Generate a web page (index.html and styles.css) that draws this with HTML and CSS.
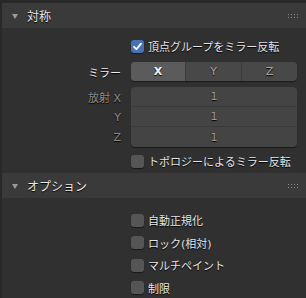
FILE: index.html
```html
<!DOCTYPE html>
<html lang="ja">
<head>
<meta charset="utf-8">
<link rel="stylesheet" href="styles.css">
</head>
<body>
<div class="app">
  <section class="panel">
    <div class="panel-header">
      <span class="tri"></span>
      <span class="title">対称</span>
      <span class="grip"><i></i><i></i><i></i><i></i><i></i><i></i><i></i><i></i></span>
    </div>
    <div class="panel-body sym">
      <div class="row r-check1">
        <div class="label"></div>
        <div class="ctrl"><span class="box on"><svg viewBox="0 0 13 13" width="13" height="13"><path d="M3 6.8 L5.4 9.2 L10 3.6" fill="none" stroke="#fff" stroke-width="1.8" stroke-linecap="round" stroke-linejoin="round"/></svg></span><span class="ctext">頂点グループをミラー反転</span></div>
      </div>
      <div class="row r-mirror">
        <div class="label bright">ミラー</div>
        <div class="ctrl seg">
          <span class="sel">X</span><span>Y</span><span>Z</span>
        </div>
      </div>
      <div class="radial">
        <div class="row r-field">
          <div class="label dim">放射 X</div>
          <div class="ctrl field first">1</div>
        </div>
        <div class="row r-field">
          <div class="label dim">Y</div>
          <div class="ctrl field">1</div>
        </div>
        <div class="row r-field">
          <div class="label dim">Z</div>
          <div class="ctrl field last">1</div>
        </div>
      </div>
      <div class="row r-check2">
        <div class="label"></div>
        <div class="ctrl"><span class="box"></span><span class="ctext">トポロジーによるミラー反転</span></div>
      </div>
    </div>
  </section>
  <section class="panel">
    <div class="panel-header">
      <span class="tri"></span>
      <span class="title">オプション</span>
      <span class="grip"><i></i><i></i><i></i><i></i><i></i><i></i><i></i><i></i></span>
    </div>
    <div class="panel-body opts">
      <div class="row r-opt"><div class="label"></div><div class="ctrl"><span class="box"></span><span class="ctext">自動正規化</span></div></div>
      <div class="row r-opt"><div class="label"></div><div class="ctrl"><span class="box"></span><span class="ctext">ロック(相対)</span></div></div>
      <div class="row r-opt"><div class="label"></div><div class="ctrl"><span class="box"></span><span class="ctext">マルチペイント</span></div></div>
      <div class="row r-opt"><div class="label"></div><div class="ctrl"><span class="box"></span><span class="ctext">制限</span></div></div>
    </div>
  </section>
</div>
</body>
</html>
```
FILE: styles.css
```css
html, body {
  margin: 0;
  padding: 0;
  background: #282828;
  width: 306px;
  height: 298px;
  overflow: hidden;
}
.app {
  padding-top: 3px;
  padding-left: 2px;
  font-family: "DejaVu Sans", "Noto Sans CJK JP", sans-serif;
  font-size: 11px;
  color: #e6e6e6;
}
.panel-header {
  height: 25px;
  box-sizing: border-box;
  background: #3a3a3a;
  display: flex;
  align-items: center;
  padding-left: 10px;
  padding-right: 8px;
}
.tri {
  width: 0;
  height: 0;
  border-left: 3.5px solid transparent;
  border-right: 3.5px solid transparent;
  border-top: 5px solid #9a9a9a;
  margin-right: 9px;
  margin-top: 1px;
}
.title {
  flex: 1;
  font-size: 12px;
  color: #e8e8e8;
  text-shadow: 0 1px 1px #000;
}
.grip {
  display: grid;
  grid-template-columns: repeat(4, 1px);
  grid-template-rows: repeat(2, 1px);
  column-gap: 2px;
  row-gap: 2px;
  margin-top: 1px;
}
.grip i {
  width: 1px;
  height: 1px;
  background: #8a8a8a;
  display: block;
}
.panel-body {
  background: #303030;
  display: flex;
  flex-direction: column;
}
.sym {
  padding-top: 8px;
  height: 145px;
  box-sizing: border-box;
}
.opts {
  padding-top: 11px;
  height: 110px;
  box-sizing: border-box;
}
.row {
  display: flex;
  align-items: center;
}
.label {
  width: 129px;
  flex: none;
  text-align: right;
  padding-right: 10px;
  box-sizing: border-box;
  text-shadow: 0 1px 1px #000;
}
.label.bright { color: #ececec; }
.label.dim { color: #8c8c8c; }
.ctrl {
  width: 166px;
  display: flex;
  align-items: center;
}
.r-check1 { height: 20px; }
.r-mirror { height: 19px; margin-top: 6px; }
.radial { margin-top: 6px; }
.r-field { height: 20px; }
.r-check2 { height: 20px; margin-top: 4px; }
.r-opt { height: 22.5px; }
.box {
  width: 13px;
  height: 13px;
  border-radius: 3px;
  background: #555555;
  flex: none;
  margin-right: 4px;
  box-shadow: 0 1px 1px rgba(0,0,0,0.5);
  display: flex;
}
.box.on { background: #4772b3; }
.ctext {
  color: #e6e6e6;
  text-shadow: 0 1px 1px #000;
  white-space: nowrap;
}
.seg {
  height: 19px;
  display: flex;
  border-radius: 4px;
  overflow: hidden;
  background: #484848;
  box-shadow: 0 1px 1px rgba(0,0,0,0.45);
}
.seg span {
  flex: 1;
  text-align: center;
  line-height: 19px;
  color: #a8a8a8;
  border-left: 1px solid #3a3a3a;
  text-shadow: 0 1px 1px #000;
}
.seg span:first-child { border-left: none; flex: 0 0 54px; }
.seg span.sel { background: #5b5b5b; color: #f0f0f0; font-weight: bold; }
.field {
  height: 20px;
  box-sizing: border-box;
  background: #444444;
  justify-content: center;
  color: #9c9c9c;
  text-shadow: 0 1px 1px #000;
  border-bottom: 1px solid #3a3a3a;
}
.field.first { border-radius: 4px 4px 0 0; }
.field.last { border-radius: 0 0 4px 4px; border-bottom: none; box-shadow: 0 1px 1px rgba(0,0,0,0.45); }
```
